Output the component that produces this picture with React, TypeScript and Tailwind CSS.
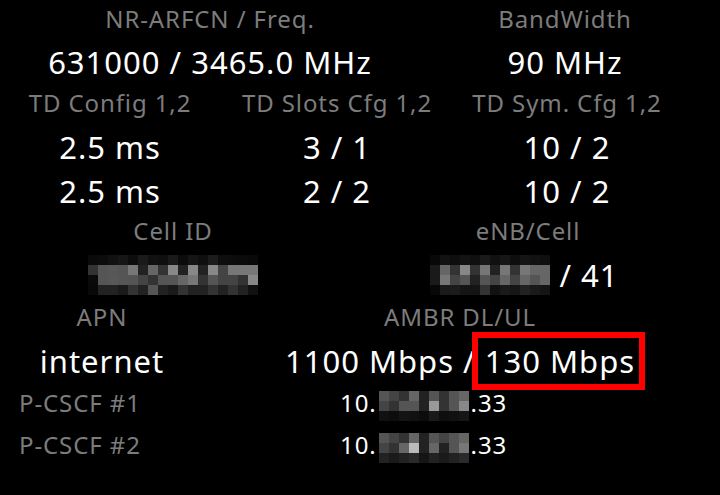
import React from "react";

type Grid = string[][];

const cellMosaic: Grid = [
  ["#0a0a0a","#0c0c0c","#111","#161616","#0d0d0d","#1a1a1a","#111","#0f0f0f","#1a1a1a","#0c0c0c","#151515","#0f0f0f","#1c1c1c","#0e0e0e","#0c0c0c","#0b0b0b","#090909"],
  ["#333","#555","#575757","#555","#777","#222","#666","#333","#888","#222","#888","#222","#888","#444","#777","#777","#777"],
  ["#0a0a0a","#555","#585858","#555","#555","#444","#333","#555","#555","#666","#777","#333","#555","#444","#444","#333","#888"],
  ["#080808","#222","#222","#1a1a1a","#333","#222","#555","#222","#1a1a1a","#333","#222","#222","#333","#222","#333","#222","#111"],
];

const enbMosaic: Grid = [
  ["#080808","#121212","#0e0e0e","#141414","#101010","#1a1a1a","#111","#161616","#0e0e0e","#151515","#121212","#0f0f0f"],
  ["#1a1a1a","#666","#333","#888","#333","#777","#222","#777","#333","#777","#666","#666"],
  ["#1a1a1a","#777","#444","#555","#222","#555","#444","#666","#444","#666","#555","#666"],
  ["#070707","#1a1a1a","#1c1c1c","#151515","#141414","#333","#111","#1a1a1a","#161616","#222","#1a1a1a","#151515"],
];

const pcscf1: Grid = [
  ["#555","#444","#333","#666","#222","#555","#333","#555","#666"],
  ["#444","#333","#555","#555","#222","#999","#333","#555","#888"],
  ["#111","#0d0d0d","#141414","#111","#0c0c0c","#1a1a1a","#0e0e0e","#111","#161616"],
];

const pcscf2: Grid = [
  ["#555","#444","#333","#666","#222","#555","#444","#555","#666"],
  ["#444","#333","#666","#bbb","#222","#666","#222","#555","#777"],
  ["#222","#1a1a1a","#222","#2a2a2a","#151515","#222","#1a1a1a","#222","#2a2a2a"],
];

function Mosaic({ grid, size = 10 }: { grid: Grid; size?: number }) {
  const cols = grid[0].length;
  const rows = grid.length;
  return (
    <svg
      width={cols * size}
      height={rows * size}
      viewBox={`0 0 ${cols * size} ${rows * size}`}
      shapeRendering="crispEdges"
      className="block shrink-0"
    >
      {grid.map((row, r) =>
        row.map((c, i) => (
          <rect key={`${r}-${i}`} x={i * size} y={r * size} width={size} height={size} fill={c} />
        ))
      )}
    </svg>
  );
}

export default function App() {
  return (
    <div
      className="w-[720px] h-[495px] bg-black overflow-hidden text-white"
      style={{ fontFamily: '"Noto Sans", "Open Sans", sans-serif' }}
    >
      {/* Row 1 labels */}
      <div className="flex h-[38px] leading-[38px] text-[24px] tracking-[0.9px] text-[#7c7c7c]">
        <div className="w-[420px] text-center">NR-ARFCN / Freq.</div>
        <div className="w-[290px] text-center">BandWidth</div>
      </div>
      {/* Row 2 values */}
      <div className="flex h-[48px] leading-[48px] text-[31px] tracking-[1px]">
        <div className="w-[420px] text-center">631000 / 3465.0 MHz</div>
        <div className="w-[290px] text-center">90 MHz</div>
      </div>
      {/* Row 3 labels */}
      <div className="flex h-[34px] leading-[34px] text-[24px] tracking-[0.9px] text-[#7c7c7c]">
        <div className="w-[220px] text-center">TD Config 1,2</div>
        <div className="w-[234px] text-center">TD Slots Cfg 1,2</div>
        <div className="w-[226px] text-center">TD Sym. Cfg 1,2</div>
      </div>
      {/* Row 4 */}
      <div className="flex h-[54px] leading-[54px] text-[31px] tracking-[1px]">
        <div className="w-[220px] text-center">2.5 ms</div>
        <div className="w-[234px] text-center">3 / 1</div>
        <div className="w-[226px] text-center">10 / 2</div>
      </div>
      {/* Row 5 */}
      <div className="flex h-[34px] leading-[34px] text-[31px] tracking-[1px]">
        <div className="w-[220px] text-center">2.5 ms</div>
        <div className="w-[234px] text-center">2 / 2</div>
        <div className="w-[226px] text-center">10 / 2</div>
      </div>
      {/* Row 6 labels */}
      <div className="flex h-[45px] leading-[45px] text-[24px] tracking-[0.9px] text-[#7c7c7c]">
        <div className="w-[346px] text-center">Cell ID</div>
        <div className="w-[364px] text-center">eNB/Cell</div>
      </div>
      {/* Row 7 */}
      <div className="flex h-[44px] leading-[44px] text-[31px] tracking-[1px]">
        <div className="w-[346px] flex items-center justify-center">
          <Mosaic grid={cellMosaic} />
        </div>
        <div className="w-[357px] flex items-center justify-center gap-[9px]">
          <Mosaic grid={enbMosaic} />
          <span>/ 41</span>
        </div>
      </div>
      {/* Row 8 labels */}
      <div className="flex h-[40px] leading-[40px] text-[24px] tracking-[0.9px] text-[#7c7c7c]">
        <div className="w-[204px] text-center">APN</div>
        <div className="w-[512px] text-center">AMBR DL/UL</div>
      </div>
      {/* Row 9 */}
      <div className="flex h-[48px] leading-[48px] text-[31px] tracking-[1px]">
        <div className="w-[204px] text-center">internet</div>
        <div className="w-[512px] text-center">
          1100 Mbps /{" "}
          <span className="relative">
            130 Mbps
            <span className="absolute left-[-13px] right-[-10px] top-[-8px] bottom-[-8px] border-[6px] border-[#ff0000]" />
          </span>
        </div>
      </div>
      {/* Row 10 */}
      <div className="flex h-[35px] leading-[35px] text-[24px] tracking-[0.9px]">
        <div className="w-[340px] pl-[19px] text-[#7c7c7c]">P-CSCF #1</div>
        <div className="flex items-center">
          <span>10.</span>
          <div className="mt-[6px] ml-[2px] mr-[2px]">
            <Mosaic grid={pcscf1} />
          </div>
          <span>.33</span>
        </div>
      </div>
      {/* Row 11 */}
      <div className="flex h-[49px] leading-[49px] text-[24px] tracking-[0.9px]">
        <div className="w-[340px] pl-[19px] text-[#7c7c7c]">P-CSCF #2</div>
        <div className="flex items-center">
          <span>10.</span>
          <div className="mt-[6px] ml-[2px] mr-[2px]">
            <Mosaic grid={pcscf2} />
          </div>
          <span>.33</span>
        </div>
      </div>
    </div>
  );
}
